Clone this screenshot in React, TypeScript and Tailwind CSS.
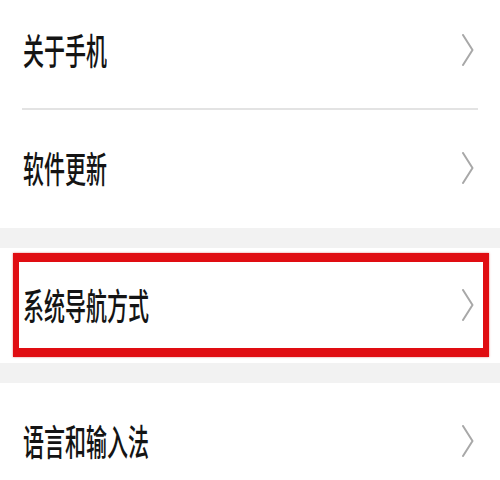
import React from "react";

const Chevron = () => (
  <svg width="14" height="32" viewBox="0 0 14 32" className="shrink-0">
    <polyline points="2,1 11.5,16 2,31" fill="none" stroke="#a8a8a8" strokeWidth="2" strokeLinecap="round" strokeLinejoin="round" />
  </svg>
);

const Label = ({ text }: { text: string }) => (
  <span
    className="inline-block origin-center scale-y-[1.72] text-[21px] font-medium leading-none text-[#141414]"
    style={{ fontFamily: '"Noto Sans CJK SC", "Noto Sans", sans-serif' }}
  >
    {text}
  </span>
);

export default function App() {
  return (
    <div className="w-[500px] h-[480px] overflow-hidden bg-white">
      <div className="bg-white">
        <div className="flex h-[108px] items-center justify-between pb-[8px] pl-[23px] pr-[25px]">
          <Label text="关于手机" />
          <Chevron />
        </div>
        <div className="mx-[22px] h-[2px] bg-[#e3e3e3]" />
        <div className="flex h-[118px] items-center justify-between pb-[2px] pl-[23px] pr-[25px]">
          <Label text="软件更新" />
          <Chevron />
        </div>
      </div>
      <div className="h-[20px] bg-[#f2f2f2]" />
      <div className="h-[115px] bg-white pt-[5px] pl-[13px] pr-[11px]">
        <div className="flex h-[104px] items-center justify-between border-x-[6px] border-y-[9px] border-[#e00d12] pl-[4px] pr-[8px] shadow-[0_0_2px_rgba(200,0,0,0.5)]">
          <Label text="系统导航方式" />
          <Chevron />
        </div>
      </div>
      <div className="h-[20px] bg-[#f2f2f2]" />
      <div className="flex h-[117px] items-center justify-between bg-white pb-[1px] pl-[23px] pr-[25px]">
        <Label text="语言和输入法" />
        <Chevron />
      </div>
    </div>
  );
}
